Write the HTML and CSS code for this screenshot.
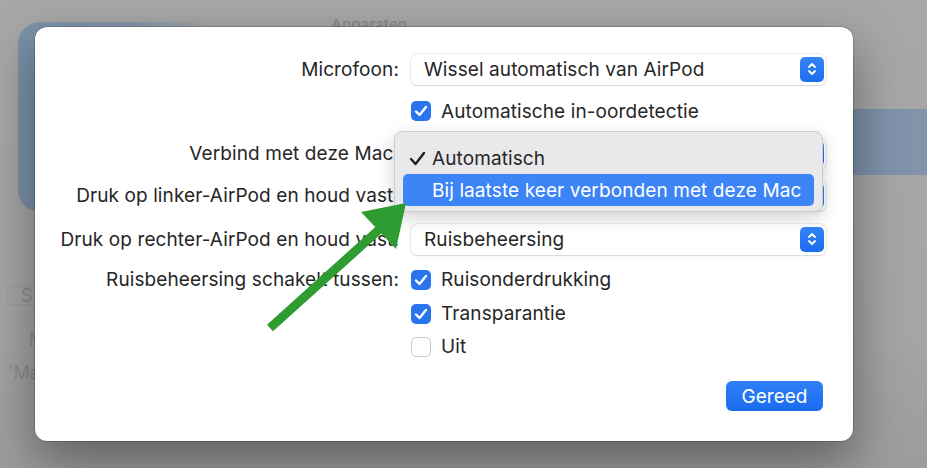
FILE: index.html
```html
<!DOCTYPE html>
<html lang="nl">
<head>
    <meta charset="UTF-8">
    <meta name="viewport" content="width=device-width, initial-scale=1.0">
    <title>AirPods</title>
    <link rel="stylesheet" href="styles.css">
</head>

<body>
    <div class="window">
        <div class="bg-card"></div>
        <div class="bg-title">Apparaten</div>
        <div class="bg-band"></div>
        <div class="bg-side">
            <div class="bg-search">S</div>
            <div class="bg-item">N</div>
            <div class="bg-item mac">'Ma</div>
        </div>

        <div class="sheet">
            <div class="form">
                <div class="label">Microfoon:</div>
                <div class="control">
                    <div class="popup">
                        <span>Wissel automatisch van AirPod</span>
                        <span class="stepper"><svg width="10" height="16" viewBox="0 0 10 16"><path d="M2 6 L5 3 L8 6 M2 10 L5 13 L8 10" fill="none" stroke="white" stroke-width="1.8" stroke-linecap="round" stroke-linejoin="round"/></svg></span>
                    </div>
                </div>

                <div class="label"></div>
                <div class="control">
                    <label class="check"><span class="box on"></span>Automatische in-oordetectie</label>
                </div>

                <div class="label">Verbind met deze Mac:</div>
                <div class="control">
                    <!-- value hidden under the open menu -->
                    <div class="popup">
                        <span></span>
                        <span class="stepper"></span>
                    </div>
                </div>

                <div class="label">Druk op linker-AirPod en houd vast:</div>
                <div class="control">
                    <div class="popup">
                        <span></span>
                        <span class="stepper"></span>
                    </div>
                </div>

                <div class="label">Druk op rechter-AirPod en houd vast:</div>
                <div class="control">
                    <div class="popup">
                        <span>Ruisbeheersing</span>
                        <span class="stepper"><svg width="10" height="16" viewBox="0 0 10 16"><path d="M2 6 L5 3 L8 6 M2 10 L5 13 L8 10" fill="none" stroke="white" stroke-width="1.8" stroke-linecap="round" stroke-linejoin="round"/></svg></span>
                    </div>
                </div>

                <div class="label">Ruisbeheersing schakelt tussen:</div>
                <div class="control">
                    <label class="check"><span class="box on"></span>Ruisonderdrukking</label>
                </div>

                <div class="label"></div>
                <div class="control">
                    <label class="check"><span class="box on"></span>Transparantie</label>
                </div>

                <div class="label"></div>
                <div class="control">
                    <label class="check"><span class="box"></span>Uit</label>
                </div>
            </div>

            <div class="footer">
                <button class="primary">Gereed</button>
            </div>

            <div class="menu">
                <div class="menu-item">
                    <span class="tick"><svg width="17" height="15" viewBox="0 0 17 15"><path d="M2 8 L6.5 13 L15 2" fill="none" stroke="#1f1f1f" stroke-width="2.4" stroke-linecap="round" stroke-linejoin="round"/></svg></span>Automatisch
                </div>
                <div class="menu-item active"><span class="tick"></span>Bij laatste keer verbonden met deze Mac</div>
            </div>
        </div>

        <svg class="arrow" width="927" height="468" viewBox="0 0 927 468">
            <line x1="270" y1="328" x2="382" y2="227" stroke="#2e9c31" stroke-width="9"/>
            <polygon points="361,212 406,203 396,249" fill="#2e9c31"/>
        </svg>
    </div>
</body>

</html>
```

FILE: styles.css
```css
* {
    margin: 0;
    padding: 0;
    box-sizing: border-box;
}

body {
    background-color: #a6a6a6;
    font-family: "Inter", "Liberation Sans", sans-serif;
    color: #262626;
    overflow: hidden;
}

.window {
    position: relative;
    width: 927px;
    height: 468px;
    background: linear-gradient(180deg, #a7a7a7 0%, #a5a5a5 70%, #9c9c9c 100%);
}

/* stuff behind the sheet */
.bg-card {
    position: absolute;
    left: 18px;
    top: 22px;
    width: 200px;
    height: 190px;
    border-radius: 22px;
    background: linear-gradient(90deg, #7b91a8 0%, #8597aa 55%, rgba(166, 166, 166, 0) 100%);
}

.bg-title {
    position: absolute;
    left: 331px;
    top: 15px;
    font-size: 15px;
    font-weight: 600;
    color: #8b8b8b;
}

.bg-band {
    position: absolute;
    left: 840px;
    top: 109px;
    width: 87px;
    height: 66px;
    background: linear-gradient(90deg, #7d91a9, #8194ab);
}

.bg-side {
    position: absolute;
    left: 6px;
    top: 286px;
    width: 40px;
    color: #8c8c8c;
    font-size: 18px;
}

.bg-search {
    height: 19px;
    border: 1px solid #9d9d9d;
    border-radius: 4px;
    padding-left: 14px;
    line-height: 17px;
}

.bg-item {
    margin-top: 24px;
    margin-left: 6px;
    padding-left: 17px;
}

.bg-item.mac {
    margin-top: 12px;
    margin-left: 2px;
    padding-left: 0;
}

/* the sheet */
.sheet {
    position: absolute;
    left: 35px;
    top: 27px;
    width: 818px;
    height: 414px;
    background: #fff;
    border-radius: 12px;
    box-shadow: 0 0 0 0.5px rgba(0, 0, 0, 0.35), 0 20px 50px rgba(0, 0, 0, 0.4);
    padding-top: 21px;
}

.form {
    display: grid;
    grid-template-columns: 364px 415px;
    grid-template-rows: 42px 42px 42px 42px 46px 35px 33px 33px;
    column-gap: 12px;
    align-items: center;
    font-size: 19px;
    letter-spacing: 0.1px;
}

.label {
    text-align: right;
    white-space: nowrap;
}

.popup {
    display: flex;
    align-items: center;
    justify-content: space-between;
    height: 31px;
    padding-left: 13px;
    padding-right: 2px;
    background: #fff;
    border-radius: 6px;
    box-shadow: 0 0 0 0.5px rgba(0, 0, 0, 0.14), 0 1px 2px rgba(0, 0, 0, 0.1);
}

.stepper {
    display: flex;
    align-items: center;
    justify-content: center;
    width: 24px;
    height: 25px;
    border-radius: 5px;
    background: linear-gradient(180deg, #3585f6, #1c6cef);
}

.check {
    display: flex;
    align-items: center;
    gap: 10px;
}

.box {
    width: 20px;
    height: 20px;
    border-radius: 5px;
    border: 1px solid #c9c9c9;
    background: #fff;
    flex-shrink: 0;
}

.box.on {
    border: none;
    background: #2b74ef url("data:image/svg+xml;utf8,<svg xmlns='http://www.w3.org/2000/svg' width='20' height='20' viewBox='0 0 20 20'><path d='M5 10.5 L8.5 14 L15 6' fill='none' stroke='white' stroke-width='2.4' stroke-linecap='round' stroke-linejoin='round'/></svg>") center no-repeat;
}

.footer {
    display: flex;
    justify-content: flex-end;
    padding-right: 30px;
    margin-top: 18px;
}

.primary {
    width: 97px;
    height: 30px;
    border: none;
    border-radius: 6px;
    background: linear-gradient(180deg, #2f80f6, #1a6cef);
    color: #fff;
    font-family: "Inter", "Liberation Sans", sans-serif;
    font-size: 19px;
}

/* open popup menu */
.menu {
    position: absolute;
    left: 359px;
    top: 104px;
    width: 429px;
    height: 81px;
    padding: 10px 8px 7px;
    background: #e9e9ec;
    border: 1px solid #cdcdd1;
    border-radius: 8px;
    box-shadow: 0 6px 18px rgba(0, 0, 0, 0.18);
    font-size: 19px;
    letter-spacing: 0.1px;
}

.menu-item {
    display: flex;
    align-items: center;
    height: 32px;
    border-radius: 5px;
    padding-left: 6px;
    white-space: nowrap;
}

.menu-item.active {
    background: #3d84f6;
    color: #fff;
}

.tick {
    display: flex;
    align-items: center;
    width: 23px;
}

.arrow {
    position: absolute;
    left: 0;
    top: 0;
    pointer-events: none;
}
```
